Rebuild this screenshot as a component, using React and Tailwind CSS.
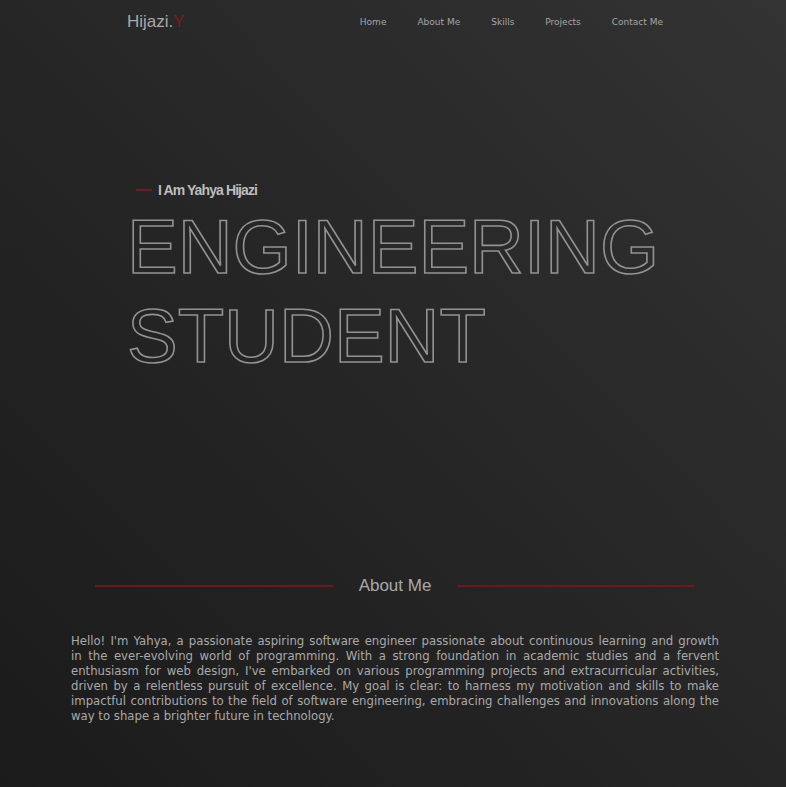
const navItems = ['Home', 'About Me', 'Skills', 'Projects', 'Contact Me'];

const aboutLines = [
  "Hello! I'm Yahya, a passionate aspiring software engineer passionate about continuous learning and growth",
  'in the ever-evolving world of programming. With a strong foundation in academic studies and a fervent',
  "enthusiasm for web design, I've embarked on various programming projects and extracurricular activities,",
  'driven by a relentless pursuit of excellence. My goal is clear: to harness my motivation and skills to make',
  'impactful contributions to the field of software engineering, embracing challenges and innovations along the',
];

export default function App() {
  return (
    <div className="min-h-[787px] w-full bg-linear-to-tr from-[#1b1b1b] via-[#262626] to-[#333333] pl-[4px] font-['Liberation_Sans',Arial,sans-serif]">
      {/* nav */}
      <header className="mx-auto flex h-[43px] w-[536px] items-center justify-between">
        <div className="text-[17px] text-[#a8a8a8]">
          Hijazi.<span className="text-[#7a1a20]">Y</span>
        </div>
        <nav className="flex items-center gap-[31px] pt-[2px] font-['DejaVu_Sans',sans-serif] text-[9px] text-[#a5a5a5]">
          {navItems.map((item) => (
            <a key={item} href="#" className="hover:text-white">
              {item}
            </a>
          ))}
        </nav>
      </header>

      {/* hero */}
      <section className="mx-auto w-[536px] pt-[137px]">
        <div className="flex h-[20px] items-center gap-[6px] pl-[9px]">
          <span className="h-[2px] w-[16px] bg-[#6e1c22]" />
          <span className="text-[14px] font-bold tracking-[-0.9px] text-[#bdbdbd]">I Am Yahya Hijazi</span>
        </div>
        <h1 className="mt-[2px] whitespace-nowrap text-[76px] leading-[89px] text-transparent [-webkit-text-stroke:1.6px_#929292]">
          ENGINEERING
          <br />
          STUDENT
        </h1>
      </section>

      {/* about */}
      <section className="mx-auto mt-[194px] w-[600px]">
        <div className="flex h-[24px] items-center gap-[26px]">
          <span className="h-[2px] flex-1 bg-[#6a1a1f]" />
          <h2 className="text-[17px] text-[#a8a8a8]">About Me</h2>
          <span className="h-[2px] flex-1 bg-[#6a1a1f]" />
        </div>
      </section>
      <div className="mx-auto mt-[36px] w-[648px] font-['DejaVu_Sans',sans-serif] text-[11.7px] leading-[15px] text-[#a9a9a9]">
        {aboutLines.map((line) => (
          <p key={line} className="whitespace-nowrap text-justify [text-align-last:justify]">
            {line}
          </p>
        ))}
        <p>way to shape a brighter future in technology.</p>
      </div>
    </div>
  );
}
